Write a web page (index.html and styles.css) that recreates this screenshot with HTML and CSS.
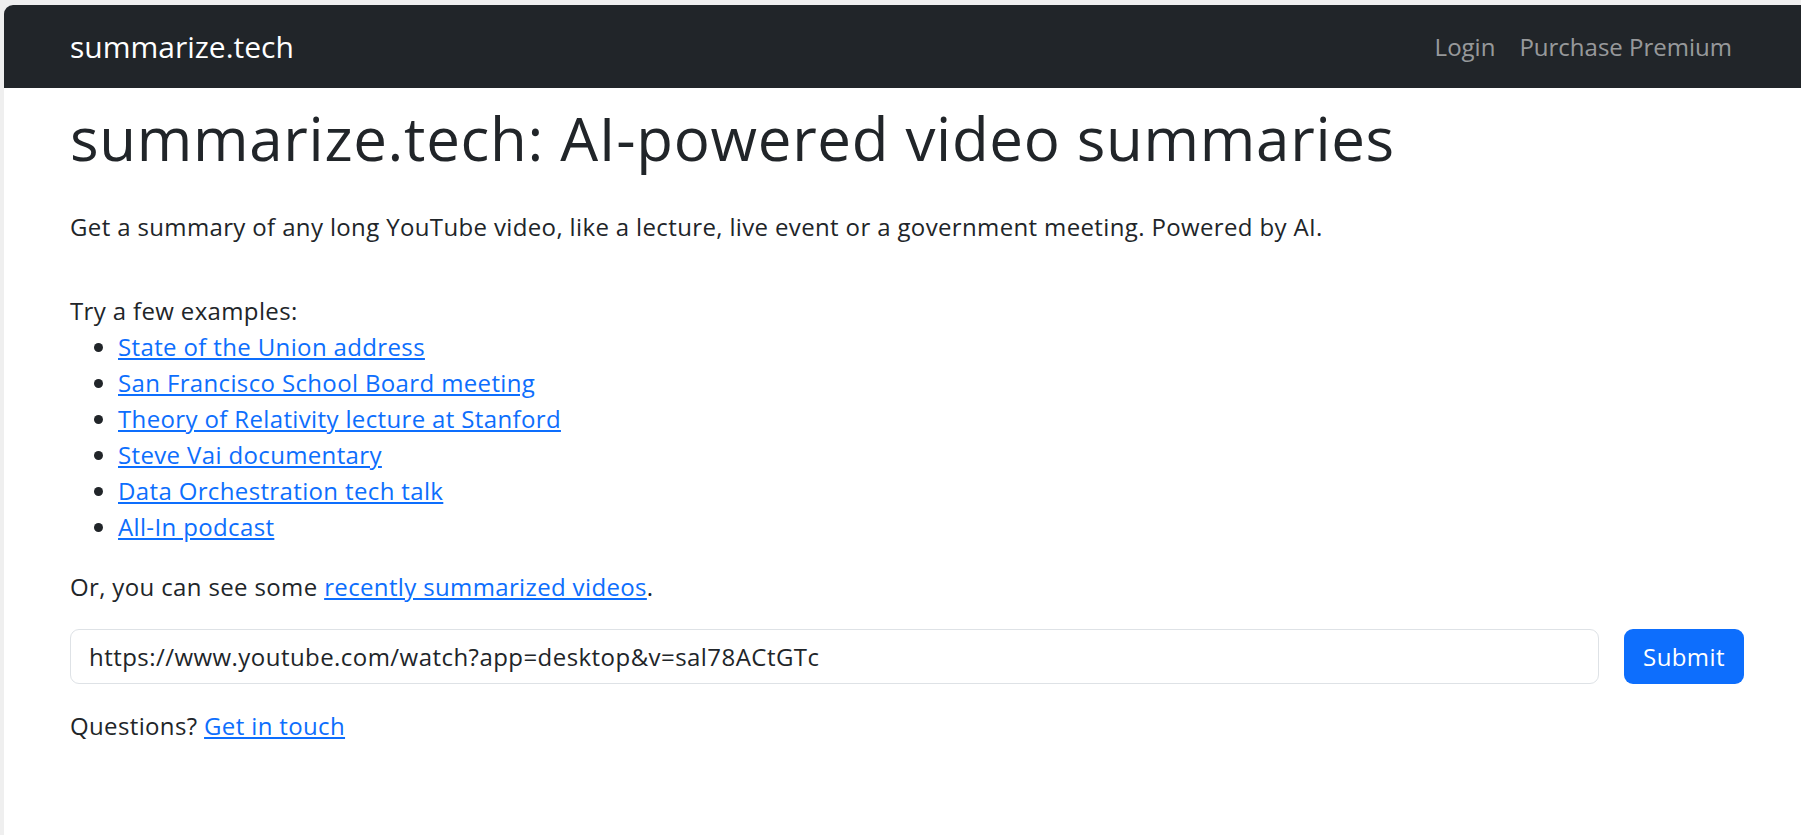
FILE: index.html
```html
<!DOCTYPE html>
<html lang="en">
<head>
<meta charset="utf-8">
<title>summarize.tech: AI-powered video summaries</title>
<link rel="stylesheet" href="styles.css">
</head>
<body>
<div class="window">
  <nav class="navbar">
    <a class="brand" href="#">summarize.tech</a>
    <div class="nav-links">
      <a class="nav-link" href="#">Login</a>
      <a class="nav-link" href="#">Purchase Premium</a>
    </div>
  </nav>
  <main class="main">
    <h1 class="title">summarize.tech: AI-powered video summaries</h1>
    <p class="intro">Get a summary of any long YouTube video, like a lecture, live event or a government meeting. Powered by AI.</p>
    <div class="examples">
      <div class="examples-label">Try a few examples:</div>
      <ul class="examples-list">
        <li><a href="#">State of the Union address</a></li>
        <li><a href="#">San Francisco School Board meeting</a></li>
        <li><a href="#">Theory of Relativity lecture at Stanford</a></li>
        <li><a href="#">Steve Vai documentary</a></li>
        <li><a href="#">Data Orchestration tech talk</a></li>
        <li><a href="#">All-In podcast</a></li>
      </ul>
    </div>
    <p class="line">Or, you can see some <a href="#">recently summarized videos</a>.</p>
    <form class="url-form">
      <input class="url-input" type="text" value="https://www.youtube.com/watch?app=desktop&amp;v=sal78ACtGTc">
      <button class="submit" type="button">Submit</button>
    </form>
    <p class="line">Questions? <a href="#">Get in touch</a></p>
  </main>
</div>
</body>
</html>
```
FILE: styles.css
```css
* { box-sizing: border-box; }

html, body {
  margin: 0;
  height: 100%;
}

body {
  background: #efefef;
  font-family: "Open Sans", "Noto Sans", sans-serif;
  font-size: 24px;
  letter-spacing: 0.36px;
  line-height: 36px;
  color: #212529;
  overflow: hidden;
}

.window {
  margin: 5px 0 0 4px;
  background: #ffffff;
  border-top-left-radius: 9px;
  overflow: hidden;
  height: 830px;
}

.navbar {
  height: 83px;
  background: #212529;
  display: flex;
  align-items: center;
  justify-content: space-between;
  padding: 0 57px 0 66px;
}

.brand {
  color: #ffffff;
  text-decoration: none;
  font-size: 30px;
  letter-spacing: 0;
  line-height: 40px;
}

.nav-links {
  display: flex;
}

.nav-link {
  color: rgba(255, 255, 255, 0.55);
  text-decoration: none;
  padding: 0 12px;
  font-size: 24px;
  letter-spacing: 0;
}

.main {
  padding: 0 57px 0 66px;
}

.title {
  margin: 14px 0 35px;
  font-size: 60px;
  letter-spacing: 0.7px;
  line-height: 72px;
  font-weight: 400;
}

.intro {
  margin: 0 0 48px;
}

a {
  color: #0d6efd;
  text-decoration: underline;
}

.examples-list {
  margin: 0 0 24px;
  padding-left: 48px;
}

.line {
  margin: 0 0 24px;
}

.url-form {
  display: flex;
  gap: 25px;
  margin: 0 0 24px;
}

.url-input {
  flex: 1;
  height: 55px;
  border: 1px solid #dee2e6;
  border-radius: 9px;
  padding: 0 18px;
  font-family: inherit;
  font-size: 24px;
  letter-spacing: 0.45px;
  color: #212529;
  background: #ffffff;
}

.submit {
  width: 120px;
  height: 55px;
  border: none;
  border-radius: 9px;
  background: #0d6efd;
  color: #ffffff;
  font-family: inherit;
  font-size: 24px;
  letter-spacing: 0.4px;
}
```
